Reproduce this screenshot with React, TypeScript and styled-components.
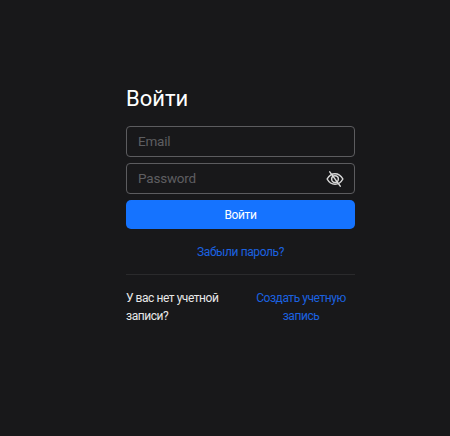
import React from "react";
import styled, { createGlobalStyle } from "styled-components";

const Global = createGlobalStyle`
  html, body { margin: 0; padding: 0; height: 100%; background: #18181a; }
  #root { height: 100%; }
  * { box-sizing: border-box; }
`;

const Page = styled.main`
  width: 450px;
  height: 436px;
  background: #18181a;
  padding: 84px 0 0 126px;
  font-family: Roboto, Inter, sans-serif;
  overflow: hidden;
`;

const Form = styled.form`
  width: 229px;
  display: flex;
  flex-direction: column;
`;

const Title = styled.h1`
  margin: 0 0 12px;
  height: 30px;
  font-size: 22px;
  line-height: 30px;
  font-weight: 400;
  color: #fff;
`;

const Field = styled.div`
  height: 31px;
  margin-bottom: 6px;
  padding: 0 10px 0 11px;
  border: 1px solid #5c5c5f;
  border-radius: 4px;
  display: flex;
  align-items: center;
  justify-content: space-between;
`;

const Input = styled.input`
  flex: 1;
  min-width: 0;
  border: 0;
  padding: 0 0 2px;
  outline: 0;
  background: transparent;
  color: #fff;
  font: 400 13.500px Roboto, Inter, sans-serif;
  letter-spacing: -0.2px;
  &::placeholder { color: #5e5e61; opacity: 1; }
`;

const EyeButton = styled.span`
  display: flex;
  color: #d8d8d8;
`;

const Submit = styled.button`
  height: 29px;
  border: 0;
  border-radius: 5px;
  background: #1573ff;
  color: #fff;
  font: 400 12px Roboto, Inter, sans-serif;
  letter-spacing: -0.4px;
`;

const Forgot = styled.a`
  margin-top: 16px;
  height: 14px;
  line-height: 14px;
  text-align: center;
  font-size: 12px;
  letter-spacing: -0.4px;
  color: #1b62e0;
`;

const Divider = styled.hr`
  margin: 15px 0 0;
  border: 0;
  height: 1px;
  background: #2a2a2c;
`;

const Footer = styled.div`
  margin-top: 15px;
  display: grid;
  grid-template-columns: 121px 1fr;
  font-size: 12px;
  line-height: 17.500px;
  letter-spacing: -0.45px;
`;

const Question = styled.span`
  color: #e8e8e8;
`;

const Register = styled.a`
  color: #1b62e0;
  text-align: center;
`;

export default function App() {
  return (
    <Page>
      <Global />
      <Form>
        <Title>Войти</Title>
        <Field>
          <Input placeholder="Email" />
        </Field>
        <Field>
          <Input placeholder="Password" />
          <EyeButton>
            <svg width="18" height="18" viewBox="0 0 24 24" fill="none" stroke="currentColor" strokeWidth="2" strokeLinecap="round" strokeLinejoin="round">
              <path d="M1.500 12C4 7.500 7.500 5 12 5s8 2.500 10.500 7c-2.500 4.500-6 7-10.500 7S4 16.500 1.500 12Z" />
              <circle cx="12" cy="12" r="4.500" />
              <path d="M5 2.500l14 19" />
            </svg>
          </EyeButton>
        </Field>
        <Submit type="button">Войти</Submit>
        <Forgot>Забыли пароль?</Forgot>
        <Divider />
        <Footer>
          <Question>У вас нет учетной записи?</Question>
          <Register>Создать учетную запись</Register>
        </Footer>
      </Form>
    </Page>
  );
}
